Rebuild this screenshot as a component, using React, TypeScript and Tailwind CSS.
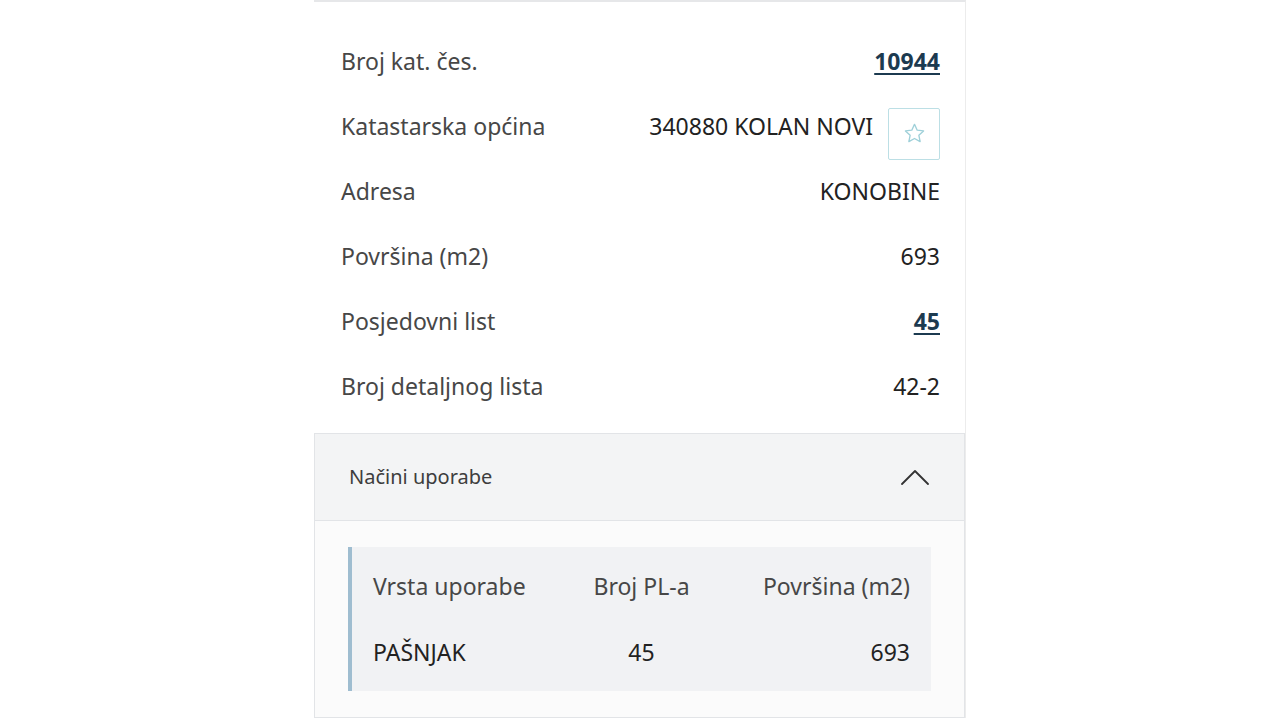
import React from "react";

const rows: { label: string; value: string; link?: boolean; star?: boolean }[] = [
    { label: "Broj kat. čes.", value: "10944", link: true },
    { label: "Katastarska općina", value: "340880 KOLAN NOVI", star: true },
    { label: "Adresa", value: "KONOBINE" },
    { label: "Površina (m2)", value: "693" },
    { label: "Posjedovni list", value: "45", link: true },
    { label: "Broj detaljnog lista", value: "42-2" },
];

function StarIcon() {
    return (
        <svg viewBox="0 0 24 24" className="h-[25px] w-[25px]" fill="none" stroke="#9fd0d9" strokeWidth={1.3} strokeLinejoin="round">
            <path d="M12 3.2l2.6 5.6 6.1.7-4.5 4.2 1.2 6.1L12 16.8l-5.4 3 1.2-6.1-4.5-4.2 6.1-.7z" />
        </svg>
    );
}

export default function App() {
    return (
        <div className="min-h-screen w-full bg-white" style={{ fontFamily: '"Noto Sans", "Open Sans", sans-serif' }}>
            <div className="mx-auto w-[652px] border-t-2 border-r border-t-[#e6e7e9] border-r-[#ececec]">
                {/* property rows */}
                <div className="pt-[27px] pb-[14px]">
                    {rows.map((r) => (
                        <div key={r.label} className="flex h-[65px] items-center justify-between pl-[27px] pr-[25px] text-[23px]">
                            <span className="text-[#474747]">{r.label}</span>
                            <div className="flex items-center gap-[15px]">
                                {r.link ? (
                                    <a className="font-bold text-[#1c3a50] underline decoration-2 underline-offset-[3px]">{r.value}</a>
                                ) : (
                                    <span className="text-[#222]">{r.value}</span>
                                )}
                                {r.star && (
                                    <button className="mt-[14px] flex h-[52px] w-[52px] items-center justify-center rounded-[2px] border border-[#bcdfe5] bg-white">
                                        <StarIcon />
                                    </button>
                                )}
                            </div>
                        </div>
                    ))}
                </div>

                {/* accordion */}
                <div className="border border-[#e2e4e7]">
                    <div className="flex h-[87px] items-center justify-between border-b border-[#e2e4e7] bg-[#f3f4f5] pl-[34px] pr-[35px]">
                        <span className="text-[20px] text-[#3d3d3d]">Načini uporabe</span>
                        <svg viewBox="0 0 28 16" className="h-[16px] w-[28px]" fill="none" stroke="#333" strokeWidth={1.8} strokeLinecap="round" strokeLinejoin="round">
                            <polyline points="1,15 14,2 27,15" />
                        </svg>
                    </div>
                    <div className="bg-[#fbfbfb] px-[33px] py-[26px]">
                        <div className="border-l-4 border-[#9fbdd0] bg-[#f1f2f4] py-[6px] pl-[21px] pr-[21px] text-[23px]">
                            <div className="grid h-[66px] grid-cols-3 items-center">
                                <span className="text-[#474747]">Vrsta uporabe</span>
                                <span className="text-center text-[#474747]">Broj PL-a</span>
                                <span className="text-right text-[#474747]">Površina (m2)</span>
                            </div>
                            <div className="grid h-[66px] grid-cols-3 items-center text-[#222]">
                                <span>PAŠNJAK</span>
                                <span className="text-center">45</span>
                                <span className="text-right">693</span>
                            </div>
                        </div>
                    </div>
                </div>
            </div>
        </div>
    );
}
